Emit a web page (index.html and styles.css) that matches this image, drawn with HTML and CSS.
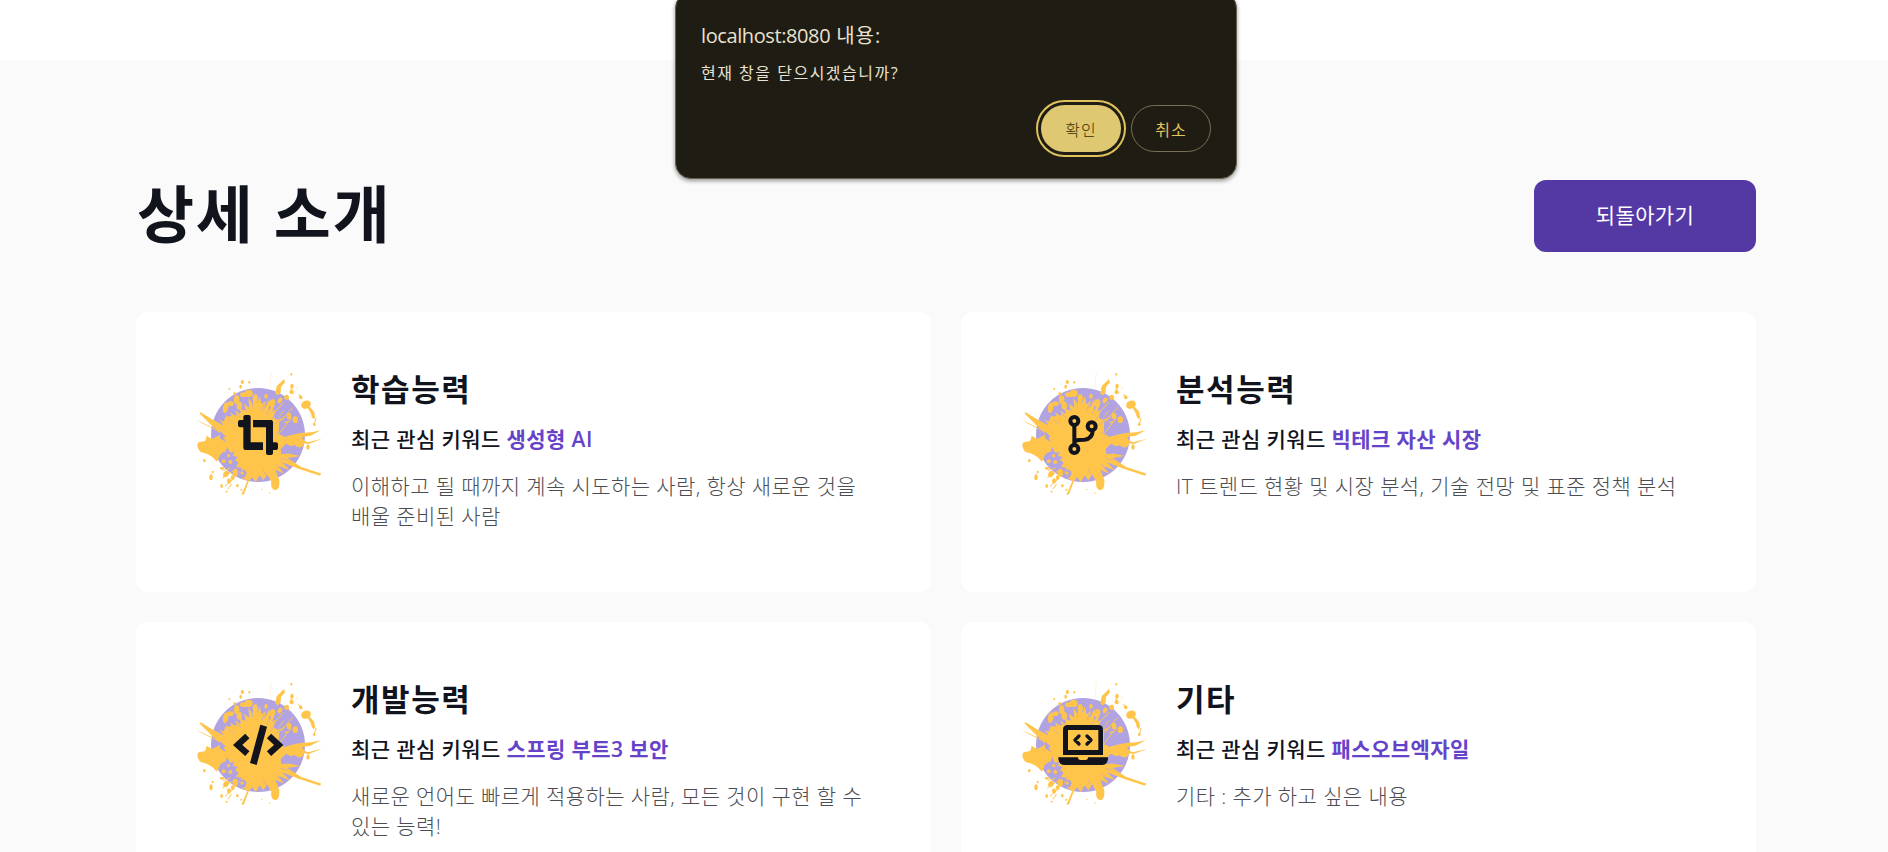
FILE: index.html
```html
<!DOCTYPE html>
<html lang="ko">
<head>
<meta charset="utf-8">
<title>상세 소개</title>
<link rel="stylesheet" href="styles.css">
</head>
<body>
<svg class="defs" width="0" height="0" aria-hidden="true">
  <symbol id="splash" viewBox="48 51 375 375">
    <circle cx="234" cy="240" r="141" fill="#b1a3e2"/>
    <g fill="#ffc54b">
      <path d="M48 195 L70 204 L112 225 L94 211 L58 175 L62 172 L96 193 L134 213 L118 194 L150 208 L136 180 L160 196 L150 172 L172 188 L166 166 L186 182 L178 158 L198 172 L192 146 L208 158 L205 128 L218 146 L222 122 L232 144 L240 124 L244 148 L258 138 L252 162 L270 130 L266 166 L288 138 L276 172 L306 146 L282 184 L314 166 L290 196 L318 184 L296 208 L330 196 L298 224 L318 226 L296 240 L330 240 L362 234 L394 232 L422 226 L392 242 L352 248 L384 262 L424 252 L386 267 L352 262 L340 272 L312 276 L336 282 L308 292 L360 303 L322 309 L364 336 L424 356 L420 362 L356 341 L306 322 L330 346 L296 334 L312 356 L286 344 L298 376 Q300 402 286 406 Q270 402 274 380 L262 358 L250 376 L238 360 L228 382 L216 366 L206 380 L192 418 L184 420 L202 378 L188 370 L176 350 L186 338 L166 336 L178 322 L158 312 L170 300 L150 288 L132 294 L118 306 L110 320 L96 304 L80 296 L60 290 Q46 272 56 262 L76 258 L80 242 L96 252 L112 244 L124 238 L112 228 Z"/>
      <path d="M136 186 L174 180 L200 160 L240 150 L268 184 L290 216 L310 288 L292 340 L224 368 L184 336 L150 290 L106 312 L70 288 L76 256 L116 248Z"/>
      <ellipse cx="378" cy="149" rx="15" ry="12" transform="rotate(-25 378 149)"/>
      <path d="M386 152 Q398 164 402 170 Q408 188 401 193 Q393 184 393 176 L384 160Z"/>
      <path d="M286 116 L290 94 L312 72 L315 82 L303 96 L302 112 L294 121Z"/>
      <ellipse cx="335" cy="111" rx="6" ry="7"/><ellipse cx="336" cy="94" rx="5" ry="8"/>
      <ellipse cx="320" cy="127" rx="7" ry="8"/><ellipse cx="300" cy="136" rx="6" ry="9" transform="rotate(30 300 136)"/>
      <ellipse cx="362" cy="127" rx="5" ry="6"/><ellipse cx="334" cy="58" rx="3" ry="4"/>
      <ellipse cx="403" cy="208" rx="4" ry="5"/><ellipse cx="327" cy="183" rx="7" ry="10"/>
      <ellipse cx="346" cy="194" rx="8" ry="10"/><ellipse cx="258" cy="124" rx="5" ry="8"/>
      <ellipse cx="276" cy="144" rx="8" ry="12" transform="rotate(25 276 144)"/>
      <ellipse cx="384" cy="276" rx="5" ry="8"/><ellipse cx="354" cy="258" rx="16" ry="21" transform="rotate(-40 354 258)"/>
      <ellipse cx="137" cy="158" rx="8" ry="16" transform="rotate(12 137 158)"/>
      <ellipse cx="152" cy="146" rx="9" ry="7"/><ellipse cx="170" cy="134" rx="8" ry="13"/>
      <ellipse cx="206" cy="115" rx="12" ry="11"/><ellipse cx="192" cy="119" rx="12" ry="7"/>
      <ellipse cx="182" cy="95" rx="4" ry="6"/><ellipse cx="187" cy="81" rx="5" ry="6"/>
      <ellipse cx="208" cy="82" rx="3" ry="4"/><ellipse cx="164" cy="116" rx="4" ry="5"/><ellipse cx="148" cy="102" rx="3" ry="3"/>
      <ellipse cx="178" cy="152" rx="8" ry="12"/><ellipse cx="226" cy="130" rx="8" ry="12"/>
      <ellipse cx="93" cy="367" rx="5" ry="9"/><ellipse cx="73" cy="317" rx="4" ry="5"/>
      <ellipse cx="98" cy="351" rx="3" ry="4"/><ellipse cx="125" cy="393" rx="4" ry="6"/>
      <ellipse cx="138" cy="357" rx="8" ry="10" transform="rotate(30 138 357)"/>
      <ellipse cx="147" cy="378" rx="6" ry="8"/><ellipse cx="158" cy="368" rx="6" ry="7"/>
      <ellipse cx="172" cy="392" rx="4" ry="5"/><ellipse cx="140" cy="410" rx="3" ry="3"/>
      <ellipse cx="166" cy="353" rx="8" ry="12"/><ellipse cx="126" cy="340" rx="7" ry="4"/>
      <circle cx="246" cy="403" r="2"/><circle cx="270" cy="414" r="2"/><circle cx="184" cy="404" r="3"/>
    </g>
    <g fill="#b1a3e2">
      <path d="M117 304 Q124 292 136 290 L142 276 L150 294 L164 290 L158 302 L174 306 L164 316 L172 336 L154 328 L142 334 L124 322Z"/>
      <path d="M178 346 Q194 338 200 354 L194 368 L180 364Z"/>
      <path d="M120 228 L138 246 L130 246 L138 262 L120 250Z"/>
      <path d="M298 196 L336 214 L350 206 L344 222 L366 222 L346 236 L312 246 L296 232Z"/>
      <path d="M302 282 L318 266 L342 278 L360 286 L352 292 L304 298Z"/>
      <path d="M286 160 L304 150 L292 178 L308 168 L292 194 L282 188Z"/>
    </g>
    <g fill="#ffc54b"><circle cx="131" cy="319" r="6"/><circle cx="151" cy="321" r="6"/><circle cx="146" cy="302" r="5"/><circle cx="186" cy="354" r="5"/></g>
    <g fill="none" stroke="#ffc54b" stroke-linecap="round">
      <path stroke-width="1.5" opacity=".4" d="M274 52 L270 94 M324 142 L354 94 M144 130 L134 124 M348 96 L354 103"/>
      <path stroke-width="3" d="M292 206 L338 158 M284 172 L312 142 M300 232 L334 190 M338 90 L330 112 M128 368 L162 346 M136 393 L158 374 M366 130 L356 118 M408 190 L402 210 M154 388 L144 402 M130 346 L150 340"/>
      <path stroke-width="1.6" stroke="#b1a3e2" d="M146 194 L160 206 M170 174 L182 188 M191 156 L200 168 M216 140 L218 156 M252 146 L246 166 M272 158 L260 178 M292 172 L272 196 M310 188 L284 208 M316 230 L290 234 M322 315 L302 310 M300 342 L290 328 M256 358 L250 346"/>
    </g>
  </symbol>
</svg>

<main class="section">
  <header class="section-head">
    <h1 class="section-title">상세 소개</h1>
    <button class="back-btn" type="button">되돌아가기</button>
  </header>
  <div class="cards">
    <article class="card">
      <div class="icon">
        <svg class="splash"><use href="#splash"/></svg>
        <svg class="glyph" viewBox="48 51 375 375">
          <path fill="#11131d" d="M190 186 Q190 180 196 180 H206 Q212 180 212 186 V262 H249 V285 H196 Q190 285 190 279 V217 H180 Q174 217 174 211 V201 Q174 195 180 195 H190Z M219 195 H273 Q279 195 279 201 V262 H288 Q294 262 294 268 V279 Q294 285 288 285 H279 V294 Q279 300 273 300 H264 Q258 300 258 294 V217 H219Z"/>
        </svg>
      </div>
      <div class="card-body">
        <h2 class="card-title">학습능력</h2>
        <p class="keyword">최근 관심 키워드 <span class="accent">생성형 AI</span></p>
        <p class="desc">이해하고 될 때까지 계속 시도하는 사람, 항상 새로운 것을 배울 준비된 사람</p>
      </div>
    </article>
    <article class="card">
      <div class="icon">
        <svg class="splash"><use href="#splash"/></svg>
        <svg class="glyph" viewBox="48 51 375 375">
          <g fill="none" stroke="#11131d" stroke-width="12"><circle cx="208" cy="198" r="12"/><circle cx="208" cy="282" r="12"/><circle cx="260" cy="214" r="12"/><path d="M208 210 V270 M208 264 Q208 257 220 255 L238 254 Q263 252 263 226"/></g>
        </svg>
      </div>
      <div class="card-body">
        <h2 class="card-title">분석능력</h2>
        <p class="keyword">최근 관심 키워드 <span class="accent">빅테크 자산 시장</span></p>
        <p class="desc">IT 트렌드 현황 및 시장 분석, 기술 전망 및 표준 정책 분석</p>
      </div>
    </article>
    <article class="card">
      <div class="icon">
        <svg class="splash"><use href="#splash"/></svg>
        <svg class="glyph" viewBox="48 36 375 375">
          <path fill="#11131d" d="M241 164 L261 170 L230 285 L210 279Z"/>
          <path fill="none" stroke="#11131d" stroke-width="19" d="M202 198 L173 225 L202 251 M267 198 L296 225 L267 251"/>
        </svg>
      </div>
      <div class="card-body">
        <h2 class="card-title">개발능력</h2>
        <p class="keyword">최근 관심 키워드 <span class="accent">스프링 부트3 보안</span></p>
        <p class="desc">새로운 언어도 빠르게 적용하는 사람, 모든 것이 구현 할 수 있는 능력!</p>
      </div>
    </article>
    <article class="card">
      <div class="icon">
        <svg class="splash"><use href="#splash"/></svg>
        <svg class="glyph" viewBox="48 36 375 375">
          <path fill="#11131d" fill-rule="evenodd" d="M174 255 V179 Q174 165 188 165 H280 Q294 165 294 179 V255Z M189 180 V240 H280 V180Z"/>
          <path fill="#11131d" d="M160 262 H219 Q219 270 227 270 H241 Q249 270 249 262 H309 V267 Q307 285 291 285 H178 Q162 285 160 267Z"/>
          <path fill="none" stroke="#11131d" stroke-width="10" stroke-linecap="round" stroke-linejoin="round" d="M222 198 L210 210 L222 222 M246 198 L258 210 L246 222"/>
        </svg>
      </div>
      <div class="card-body">
        <h2 class="card-title">기타</h2>
        <p class="keyword">최근 관심 키워드 <span class="accent">패스오브엑자일</span></p>
        <p class="desc">기타 : 추가 하고 싶은 내용</p>
      </div>
    </article>
  </div>
</main>

<div class="dialog" role="alertdialog">
  <div class="dialog-title"><span class="host">localhost:8080</span> 내용:</div>
  <div class="dialog-msg">현재 창을 닫으시겠습니까?</div>
  <div class="dialog-actions">
    <button class="dlg-btn dlg-ok" type="button">확인</button>
    <button class="dlg-btn dlg-cancel" type="button">취소</button>
  </div>
</div>
</body>
</html>
```

FILE: styles.css
```css
* { box-sizing: border-box; }
html, body { height: 100%; }
body {
  margin: 0;
  padding-top: 60px;
  background: #fff;
  color: #11131d;
  overflow: hidden;
  font-family: "Open Sans", "Noto Sans CJK KR", sans-serif;
  word-break: keep-all;
}
button { font-family: inherit; padding: 0; }
.defs { position: absolute; }
.section {
  background: #fafafa;
  padding: 120px 132px 0 136px;
  height: calc(100vh - 60px);
  overflow: hidden;
}
.section-head {
  display: flex;
  justify-content: space-between;
  align-items: flex-start;
  height: 72px;
  margin-bottom: 60px;
}
.section-title {
  margin: -5px 0 0 1px;
  font-family: "Noto Sans CJK KR", sans-serif;
  font-size: 62px;
  line-height: 72px;
  font-weight: 700;
  letter-spacing: 1.8px;
}
.back-btn {
  width: 222px;
  height: 72px;
  padding-bottom: 4px;
  border: 0;
  border-radius: 12px;
  background: #5439a5;
  color: #fff;
  font-size: 21px;
  font-weight: 400;
  letter-spacing: 0.4px;
}
.cards {
  display: grid;
  grid-template-columns: 1fr 1fr;
  grid-auto-rows: 280px;
  gap: 30px;
}
.card {
  display: flex;
  gap: 30px;
  padding: 60px;
  background: #fff;
  border-radius: 12px;
}
.icon {
  display: grid;
  flex: none;
  width: 125px;
  height: 125px;
}
.splash, .glyph { grid-area: 1 / 1; width: 125px; height: 125px; }
.card-body { flex: 1; min-width: 0; }
.card-title {
  margin: -1px 0 17px;
  font-size: 31px;
  line-height: 36px;
  font-weight: 700;
  letter-spacing: 1.6px;
}
.keyword {
  margin: 0 0 17px;
  font-size: 21px;
  line-height: 30px;
  font-weight: 500;
  letter-spacing: 0.4px;
}
.accent { color: #6543c9; font-weight: 600; }
.desc {
  margin: 0;
  font-size: 21px;
  line-height: 30px;
  font-weight: 300;
  color: #4c4d52;
  letter-spacing: 0.4px;
}
.dialog {
  position: absolute;
  left: 675px;
  top: -8px;
  width: 562px;
  height: 187px;
  padding: 30px 25px 0;
  border: 1px solid #67624f;
  border-radius: 16px;
  background: #1f1c13;
  color: #e9e2d0;
  box-shadow: 0 2px 4px rgba(0, 0, 0, .4);
}
.dialog-title { font-size: 20px; line-height: 26px; letter-spacing: 0.9px; }
.host { letter-spacing: -0.4px; }
.dialog-msg { margin-top: 12px; font-size: 16px; line-height: 24px; letter-spacing: 1.5px; }
.dialog-actions {
  display: flex;
  justify-content: flex-end;
  gap: 10px;
  margin-top: 20px;
}
.dlg-btn {
  width: 80px;
  height: 47px;
  border-radius: 24px;
  font-size: 16px;
  letter-spacing: 1px;
}
.dlg-ok {
  border: 0;
  background: #dec871;
  color: #3a3000;
  font-weight: 300;
  outline: 2px solid #dec25c;
  outline-offset: 3px;
}
.dlg-cancel {
  border: 1px solid #777052;
  background: transparent;
  color: #e2c65e;
}
```
